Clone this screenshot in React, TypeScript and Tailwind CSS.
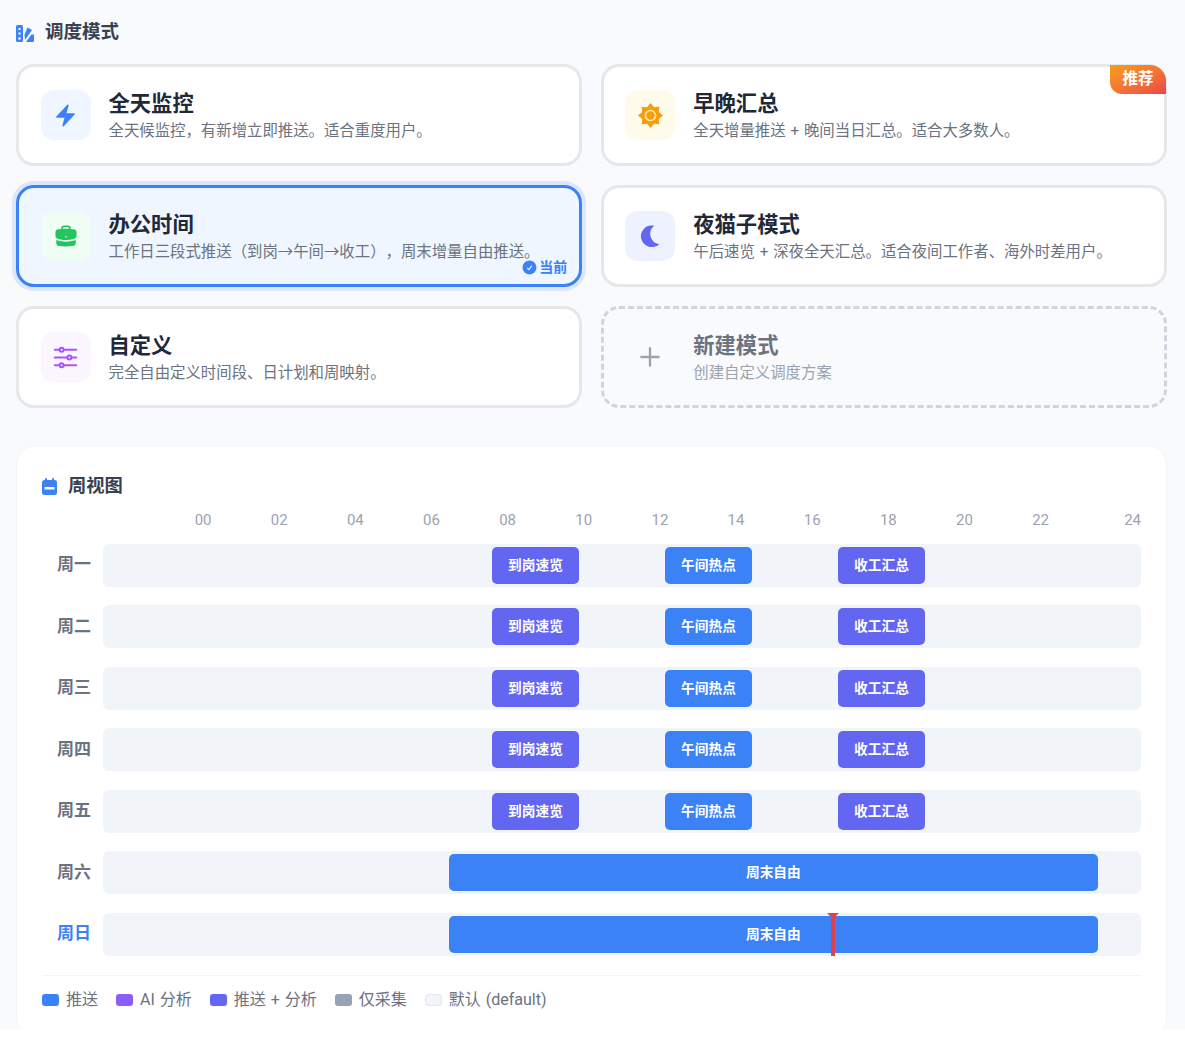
import React from "react";
import {
  HiBolt,
  HiBriefcase,
  HiCheckCircle,
  HiOutlinePlus,
  HiOutlineAdjustmentsHorizontal,
} from "react-icons/hi2";

const font = '"Roboto","Noto Sans CJK SC",sans-serif';

function Sun() {
  const pts: string[] = [];
  for (let i = 0; i < 16; i++) {
    const r = i % 2 === 0 ? 12 : 8.6;
    const a = (Math.PI * 2 * i) / 16 - Math.PI / 2;
    pts.push(`${12 + r * Math.cos(a)},${12 + r * Math.sin(a)}`);
  }
  return (
    <svg viewBox="0 0 24 24" className="w-[25px] h-[25px]">
      <polygon points={pts.join(" ")} fill="#f59e0b" />
      <circle cx="12" cy="12" r="5.6" fill="#fde7b0" />
      <circle cx="12" cy="12" r="4" fill="#f59e0b" />
    </svg>
  );
}

function Moon() {
  return (
    <svg viewBox="0 0 24 24" className="w-[26px] h-[26px]">
      <path d="M16 2.5A10 10 0 1 0 20.5 19.5A9.5 9.5 0 0 1 16 2.5Z" fill="#6366f1" />
    </svg>
  );
}

function SectionIcon() {
  return (
    <svg viewBox="0 0 18 17" className="w-[18px] h-[17px]">
      <rect x="0" y="0" width="7" height="17" rx="1.5" fill="#3b82f6" />
      <rect x="2.5" y="3" width="2" height="2" fill="#fff" />
      <rect x="2.5" y="7.5" width="2" height="2" fill="#fff" />
      <circle cx="3.5" cy="13.5" r="1.2" fill="#fff" />
      <path d="M8.5 10L11.5 2.5L16 5L9 15Z" fill="#3b82f6" />
      <path d="M10 17L15.5 9.5H18V15.5A1.5 1.5 0 0 1 16.5 17Z" fill="#3b82f6" />
    </svg>
  );
}

function CalendarIcon() {
  return (
    <svg viewBox="0 0 15 17" className="w-[15px] h-[17px]">
      <rect x="3" y="0" width="2" height="4" rx="1" fill="#3b82f6" />
      <rect x="10" y="0" width="2" height="4" rx="1" fill="#3b82f6" />
      <rect x="0" y="2" width="15" height="15" rx="2.5" fill="#3b82f6" />
      <rect x="2.5" y="9" width="10" height="2.5" fill="#fff" />
    </svg>
  );
}

function Card({
  icon,
  iconBg,
  title,
  desc,
  active,
  badge,
}: {
  icon: React.ReactNode;
  iconBg: string;
  title: string;
  desc: string;
  active?: boolean;
  badge?: boolean;
}) {
  return (
    <div
      className={
        active
          ? "relative h-[102px] rounded-[18px] border-[3px] border-[#3b82f6] bg-[#eff6ff] shadow-[0_0_0_4px_rgba(59,130,246,0.15)] pl-[21.5px] pr-3 flex items-center gap-[18px]"
          : "relative h-[102px] rounded-[18px] border-[3px] border-[#e5e7eb] bg-white pl-[21.5px] pr-3 flex items-center gap-[18px]"
      }
    >
      <div className={`w-[50px] h-[50px] shrink-0 rounded-[13px] flex items-center justify-center ${iconBg}`}>
        {icon}
      </div>
      <div className="flex flex-col pt-[2px]">
        <div className="text-[21.3px] leading-[28px] font-bold text-[#1f2937]">{title}</div>
        <div className="mt-[1.5px] text-[15.4px] leading-[22px] text-[#6b7280] whitespace-nowrap">{desc}</div>
      </div>
      {badge && (
        <div className="absolute top-[-2px] right-[-2px] w-[56px] h-[29px] rounded-bl-[12px] rounded-tr-[16px] bg-gradient-to-br from-[#f59e0b] to-[#ef4444] text-white text-[15.5px] leading-[29px] font-bold text-center">
          推荐
        </div>
      )}
      {active && (
        <div className="absolute right-[12px] bottom-[8px] flex items-center gap-[1px] text-[#3b82f6] text-[14px] leading-[18px] font-semibold">
          <HiCheckCircle className="w-[17px] h-[17px]" />
          当前
        </div>
      )}
    </div>
  );
}

function Track({ weekend, today }: { weekend?: boolean; today?: boolean }) {
  const block = "flex items-center justify-center rounded-[5px] text-white text-[13.7px] font-bold whitespace-nowrap overflow-hidden";
  return (
    <div className="relative h-[43px] rounded-[6px] bg-[#f1f5f9] py-[3px] grid grid-cols-[repeat(24,minmax(0,1fr))]">
      {weekend ? (
        <div className={`col-[9/24] bg-[#3b82f6] ${block}`}>周末自由</div>
      ) : (
        <>
          <div className={`col-[10/12] bg-[#6366f1] ${block}`}>到岗速览</div>
          <div className={`col-[14/16] bg-[#3b82f6] ${block}`}>午间热点</div>
          <div className={`col-[18/20] bg-[#6366f1] ${block}`}>收工汇总</div>
        </>
      )}
      {today && (
        <div className="absolute top-0 bottom-0 left-[70.15%] w-[4px] bg-[#e0404f]">
          <div className="absolute top-0 left-[-4px] w-0 h-0 border-l-[6px] border-r-[6px] border-t-[6px] border-l-transparent border-r-transparent border-t-[#e0404f]" />
        </div>
      )}
    </div>
  );
}

export default function App() {
  const ticks = ["00", "02", "04", "06", "08", "10", "12", "14", "16", "18", "20", "22"];
  const rows = ["周一", "周二", "周三", "周四", "周五", "周六", "周日"];
  const legend = [
    ["bg-[#3b82f6]", "推送"],
    ["bg-[#8b5cf6]", "AI 分析"],
    ["bg-[#6366f1]", "推送 + 分析"],
    ["bg-[#94a3b8]", "仅采集"],
    ["bg-[#f1f5f9] border border-[#e2e8f0]", "默认 (default)"],
  ];
  return (
    <div style={{ fontFamily: font }} className="h-[1029px] overflow-hidden bg-[#f8fafc] pl-[16px] pr-[18px] pt-[21px] [text-spacing-trim:space-all] [word-spacing:1px]">
      <div className="flex items-center gap-[11px] h-[24px] mb-[19px]">
        <SectionIcon />
        <span className="text-[18.5px] font-bold text-[#374151]">调度模式</span>
      </div>
      <div className="grid grid-cols-2 gap-x-[18.5px] gap-y-[19px]">
        <Card icon={<HiBolt className="w-[25px] h-[25px] text-[#3b82f6]" />} iconBg="bg-[#eff6ff]" title="全天监控" desc="全天候监控，有新增立即推送。适合重度用户。" />
        <Card icon={<Sun />} iconBg="bg-[#fffbeb]" title="早晚汇总" desc="全天增量推送 + 晚间当日汇总。适合大多数人。" badge />
        <Card active icon={<HiBriefcase className="w-[26px] h-[26px] text-[#22c55e]" />} iconBg="bg-[#f0fdf4]" title="办公时间" desc="工作日三段式推送（到岗→午间→收工），周末增量自由推送。" />
        <Card icon={<Moon />} iconBg="bg-[#eef2ff]" title="夜猫子模式" desc="午后速览 + 深夜全天汇总。适合夜间工作者、海外时差用户。" />
        <Card icon={<HiOutlineAdjustmentsHorizontal strokeWidth={1.6} className="w-[31px] h-[31px] text-[#a855f7]" />} iconBg="bg-[#faf5ff]" title="自定义" desc="完全自由定义时间段、日计划和周映射。" />
        <div className="h-[102px] rounded-[18px] border-[3px] border-dashed border-[#d1d5db] pl-[21.5px] pr-3 flex items-center gap-[18px]">
          <div className="w-[50px] h-[50px] shrink-0 flex items-center justify-center">
            <HiOutlinePlus strokeWidth={2} className="w-[28px] h-[28px] text-[#9ca3af]" />
          </div>
          <div className="flex flex-col pt-[2px]">
            <div className="text-[21.3px] leading-[28px] font-bold text-[#6b7280]">新建模式</div>
            <div className="mt-[1.5px] text-[15.4px] leading-[22px] text-[#9ca3af]">创建自定义调度方案</div>
          </div>
        </div>
      </div>

      <div className="mt-[37px] h-[593px] rounded-[20px] border-[1.5px] border-[#f1f5f9] bg-white pl-[25px] pr-[25px] pt-[28px]">
        <div className="flex items-center gap-[11px] h-[24px]">
          <CalendarIcon />
          <span className="text-[18.3px] font-bold text-[#374151]">周视图</span>
        </div>
        <div className="mt-[12.4px] mb-[13.2px] h-[20px] pl-[123px] flex text-[15px] leading-[20px] text-[#9ca3af]">
          {ticks.map((t) => (
            <span key={t} className="w-[76.15px] text-center">{t}</span>
          ))}
          <span className="ml-auto">24</span>
        </div>
        <div className="flex flex-col gap-[18.5px]">
          {rows.map((r, i) => (
            <div key={r} className="flex items-center gap-[12px]">
              <div className={`w-[49px] text-right text-[17px] font-semibold ${i === 6 ? "text-[#3b82f6]" : "text-[#6b7280]"}`}>{r}</div>
              <div className="flex-1">
                <Track weekend={i > 4} today={i === 6} />
              </div>
            </div>
          ))}
        </div>
        <div className="mt-[19px] pt-[14.4px] border-t border-[#f1f5f9] flex items-center gap-[18px] text-[16px] leading-[20px] text-[#6b7280]">
          {legend.map(([c, t]) => (
            <div key={t} className="flex items-center gap-[7px]">
              <span className={`w-[17px] h-[12px] rounded-[3px] ${c}`} />
              {t}
            </div>
          ))}
        </div>
      </div>
    </div>
  );
}
